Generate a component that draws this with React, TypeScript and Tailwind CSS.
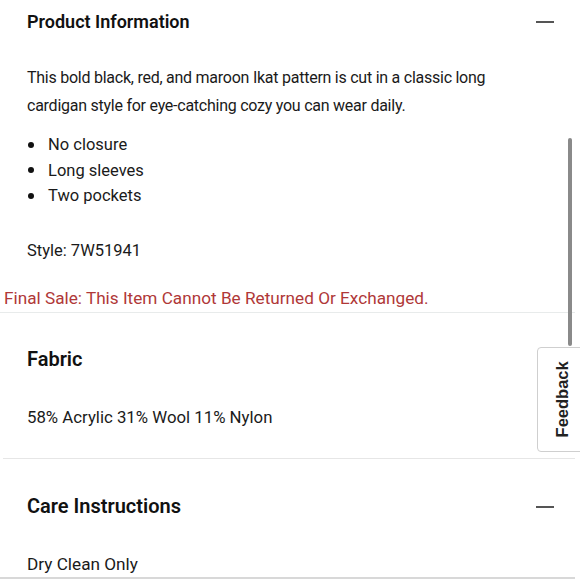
import React from 'react';

const font = { fontFamily: 'Roboto, "Liberation Sans", sans-serif' };

const Minus = () => <div className="w-[18px] h-[2px] bg-[#555] mt-[2px]" />;

export default function App() {
  return (
    <div className="relative w-[580px] h-[580px] overflow-hidden bg-white text-[#1a1a1a]" style={font}>
      <div className="w-[575px]">
        {/* Product Information */}
        <div className="flex items-center justify-between pl-[27px] pr-[21px] h-[42px]">
          <h2 className="text-[18px] font-semibold text-[#111]">Product Information</h2>
          <Minus />
        </div>
        <p className="pl-[27px] pr-[60px] mt-[22px] text-[16px] tracking-[-0.25px] leading-[28px]">
          This bold black, red, and maroon Ikat pattern is cut in a classic long cardigan style for eye-catching cozy you can wear daily.
        </p>
        <ul className="pl-[27px] mt-[12px] text-[16.5px] leading-[25.5px]">
          {['No closure', 'Long sleeves', 'Two pockets'].map(t => (
            <li key={t} className="flex items-center">
              <span className="w-[6px] h-[6px] rounded-full bg-[#111] ml-[1px] mr-[14px]" />
              {t}
            </li>
          ))}
        </ul>
        <p className="pl-[27px] mt-[29px] text-[16.5px] leading-[26px]">Style: 7W51941</p>
        <p className="pl-[4px] mt-[22px] text-[17.2px] leading-[24px] text-[#b03838]">
          Final Sale: This Item Cannot Be Returned Or Exchanged.
        </p>
        <div className="mt-[2px] h-px bg-[#e8ebeb]" />

        {/* Fabric */}
        <div className="flex items-center pl-[27px] h-[92px]">
          <h2 className="text-[20px] font-semibold text-[#111]">Fabric</h2>
        </div>
        <p className="pl-[27px] text-[16.8px] leading-[24px]">58% Acrylic 31% Wool 11% Nylon</p>
        <div className="mt-[29px] ml-[3px] h-px bg-[#e6e6e6]" />

        {/* Care Instructions */}
        <div className="flex items-center justify-between pl-[27px] pr-[21px] h-[94px]">
          <h2 className="text-[20px] font-semibold text-[#111]">Care Instructions</h2>
          <Minus />
        </div>
        <p className="pl-[27px] text-[17.2px] leading-[24px] -mt-[1px]">Dry Clean Only</p>
        <div className="mt-[1px] h-[2px] bg-[#d8d8d8]" />
      </div>

      {/* scrollbar thumb */}
      <div className="absolute left-[568px] top-[138px] w-[4px] h-[208px] rounded-full bg-[#8a8a8a]" />

      {/* Feedback tab */}
      <div className="absolute left-[537px] top-[347px] w-[50px] h-[105px] rounded-l-[4px] border border-[#cfcfcf] bg-white flex items-center justify-center">
        <span className="block -rotate-90 text-[16.5px] font-bold text-[#222] whitespace-nowrap" style={{ fontFamily: '"Liberation Sans", Arial, sans-serif' }}>
          Feedback
        </span>
      </div>
    </div>
  );
}
